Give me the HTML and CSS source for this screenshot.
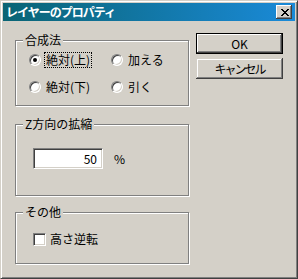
FILE: index.html
```html
<!DOCTYPE html>
<html>
<head>
  <meta charset="utf-8">
  <title>レイヤーのプロパティ</title>
  <link rel="stylesheet" href="styles.css">
</head>
<body>
  <div class="window">
    <div class="titlebar">
      <span class="title">レイヤーのプロパティ</span>
      <span class="close">
        <svg width="8" height="7" viewBox="0 0 8 7" shape-rendering="crispEdges">
          <path fill="#000" d="M0 0h2v1H0z M6 0h2v1H6z M1 1h2v1H1z M5 1h2v1H5z M2 2h4v1H2z M3 3h2v1H3z M2 4h4v1H2z M1 5h2v1H1z M5 5h2v1H5z M0 6h2v1H0z M6 6h2v1H6z"/>
        </svg>
      </span>
    </div>

    <div class="dialog">
      <div class="groups">
        <!-- blend mode -->
        <fieldset class="group blend">
          <legend>合成法</legend>
          <div class="radios">
            <label class="opt"><span class="radio on"></span><span class="focus">絶対(上)</span></label>
            <label class="opt"><span class="radio"></span><span>加える</span></label>
            <label class="opt"><span class="radio"></span><span>絶対(下)</span></label>
            <label class="opt"><span class="radio"></span><span>引く</span></label>
          </div>
        </fieldset>

        <!-- z scale -->
        <fieldset class="group scale">
          <legend>Z方向の拡縮</legend>
          <div class="row">
            <span class="field">50</span>
            <span class="unit">%</span>
          </div>
        </fieldset>

        <!-- other -->
        <fieldset class="group other">
          <legend>その他</legend>
          <label class="check-row"><span class="check"></span><span>高さ逆転</span></label>
        </fieldset>
      </div>

      <div class="buttons">
        <button class="btn default">OK</button>
        <button class="btn narrow">キャンセル</button>
      </div>
    </div>
  </div>
</body>
</html>
```

FILE: styles.css
```css
/* page */
body {
  margin: 0;
  background: #d4d0c8;
  font-family: "Noto Sans CJK JP", "Liberation Sans", sans-serif;
  font-size: 12px;
  color: #000;
}

/* window frame */
.window {
  width: 298px;
  height: 279px;
  box-sizing: border-box;
  border: 1px solid;
  border-color: #d4d0c8 #404040 #404040 #d4d0c8;
  box-shadow: inset 1px 1px 0 #fff, inset -1px -1px 0 #808080;
  padding: 2px;
  background: #d4d0c8;
}

.titlebar {
  height: 18px;
  display: flex;
  align-items: center;
  padding-left: 3px;
  background: linear-gradient(to right, #0a6474, #1a8ad8);
  color: #fff;
}

.title {
  font-weight: bold;
  font-size: 12px;
  line-height: 14px;
  letter-spacing: -1px;
}

.close {
  margin-left: auto;
  margin-right: 3px;
  width: 16px;
  height: 14px;
  box-sizing: border-box;
  display: flex;
  align-items: center;
  justify-content: center;
  padding-left: 1px;
  background: #d4d0c8;
  box-shadow: inset -1px -1px 0 #404040, inset 1px 1px 0 #fff, inset -2px -2px 0 #808080;
}

/* dialog body */
.dialog {
  display: flex;
  padding: 12px 0 0 12px;
}

.groups {
  width: 174px;
}

.group {
  margin: 0;
  padding: 0;
  border: 1px solid #808080;
  box-shadow: inset 1px 1px 0 #fff, 1px 1px 0 #fff;
  min-width: 0;
}

.group legend {
  margin-left: 7px;
  padding: 0 2px;
  line-height: 14px;
  background: #d4d0c8;
}

.blend {
  padding: 6px 0 11px 0;
}

.scale {
  margin-top: 11px;
  padding: 17px 0 26px 0;
}

.other {
  margin-top: 9px;
  padding: 13px 0 17px 0;
}

/* radios */
.radios {
  display: grid;
  grid-template-columns: 82px auto;
  row-gap: 13px;
  padding-left: 13px;
}

.opt {
  display: flex;
  align-items: center;
  height: 14px;
  line-height: 14px;
}

.radio {
  width: 12px;
  height: 12px;
  box-sizing: border-box;
  border-radius: 50%;
  border: 1px solid;
  border-color: #808080 #fff #fff #808080;
  box-shadow: inset 1px 1px 0 #404040, inset -1px -1px 0 #d4d0c8;
  background: #fff;
  margin-right: 5px;
  display: flex;
  align-items: center;
  justify-content: center;
}

.radio.on::after {
  content: "";
  width: 4px;
  height: 4px;
  border-radius: 50%;
  background: #000;
}

.focus {
  outline: 1px dotted #000;
  outline-offset: 0;
  padding: 0 1px;
  margin-left: -1px;
}

/* edit box */
.row {
  display: flex;
  align-items: center;
  padding-left: 17px;
}

.field {
  width: 70px;
  height: 21px;
  box-sizing: border-box;
  border: 1px solid;
  border-color: #808080 #fff #fff #808080;
  box-shadow: inset 1px 1px 0 #404040, inset -1px -1px 0 #d4d0c8;
  background: #fff;
  text-align: right;
  padding-right: 5px;
  line-height: 19px;
}

.unit {
  margin-left: 11px;
}

/* checkbox */
.check-row {
  display: flex;
  align-items: center;
  height: 14px;
  line-height: 14px;
  padding-left: 17px;
}

.check {
  width: 13px;
  height: 13px;
  box-sizing: border-box;
  border: 1px solid;
  border-color: #808080 #fff #fff #808080;
  box-shadow: inset 1px 1px 0 #404040, inset -1px -1px 0 #d4d0c8;
  background: #fff;
  margin-right: 4px;
}

/* buttons */
.buttons {
  display: flex;
  flex-direction: column;
  gap: 4px;
  margin-left: 7px;
}

.btn {
  width: 87px;
  height: 21px;
  padding: 0;
  border: none;
  font-family: inherit;
  font-size: 12px;
  color: #000;
  background: #d4d0c8;
  box-shadow: inset -1px -1px 0 #404040, inset 1px 1px 0 #d4d0c8, inset -2px -2px 0 #808080, inset 2px 2px 0 #fff;
}

.btn.narrow {
  letter-spacing: -2px;
}

.btn.default {
  border: 1px solid #000;
  box-shadow: inset -1px -1px 0 #404040, inset 1px 1px 0 #fff, inset -2px -2px 0 #808080;
}
```
